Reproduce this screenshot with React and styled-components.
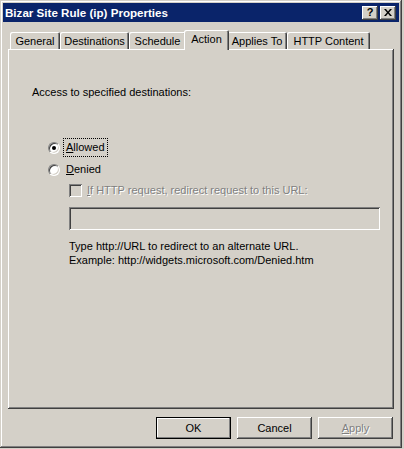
import React from 'react';
import styled, { createGlobalStyle } from 'styled-components';

const face = '#d4d0c8';
const shadow = '#808080';
const dark = '#404040';

const GlobalStyle = createGlobalStyle`
  html, body {
    margin: 0;
    padding: 0;
    background: ${face};
  }
  body {
    font-family: "Liberation Sans", Arial, sans-serif;
    font-size: 11px;
    color: #000;
  }
`;

const raised = `inset -1px -1px ${dark}, inset 1px 1px #fff, inset -2px -2px ${shadow}, inset 2px 2px ${face}`;
const sunken = `inset 1px 1px ${shadow}, inset -1px -1px #fff, inset 2px 2px ${dark}, inset -2px -2px ${face}`;

const tabs = [
  { label: 'General', width: 50 },
  { label: 'Destinations', width: 69 },
  { label: 'Schedule', width: 57 },
  { label: 'Action', width: 41, active: true },
  { label: 'Applies To', width: 60 },
  { label: 'HTTP Content', width: 83 },
];

function App() {
  return (
    <>
      <GlobalStyle />
      <Ventana>
        <BarraTitulo>
          <Titulo>Bizar Site Rule (ip) Properties</Titulo>
          <BotonesTitulo>
            <BotonTitulo>?</BotonTitulo>
            <BotonTitulo>
              <svg width="8" height="7" viewBox="0 0 8 7">
                <path d="M0 0h2l2 2.5L6 0h2L5 3.5 8 7H6L4 4.5 2 7H0l3-3.5z" fill="#000" />
              </svg>
            </BotonTitulo>
          </BotonesTitulo>
        </BarraTitulo>

        <Cuerpo>
          <FilaPestanas>
            {tabs.map((t) => (
              <Pestana key={t.label} $ancho={t.width} $activa={t.active}>
                {t.label}
              </Pestana>
            ))}
          </FilaPestanas>

          <Panel>
            <Etiqueta>Access to specified destinations:</Etiqueta>

            <GrupoRadios>
              <FilaOpcion>
                <Radio $marcado />
                <TextoFoco><u>A</u>llowed</TextoFoco>
              </FilaOpcion>
              <FilaOpcion>
                <Radio />
                <TextoOpcion><u>D</u>enied</TextoOpcion>
              </FilaOpcion>
            </GrupoRadios>

            <Sangria>
              <FilaCasilla>
                <Casilla />
                <TextoDeshabilitado><u>I</u>f HTTP request, redirect request to this URL:</TextoDeshabilitado>
              </FilaCasilla>
              <CampoTexto />
              <Ayuda>
                Type http://URL to redirect to an alternate URL.<br />
                Example: http://widgets.microsoft.com/Denied.htm
              </Ayuda>
            </Sangria>
          </Panel>

          <FilaBotones>
            <Boton $predeterminado>OK</Boton>
            <Boton>Cancel</Boton>
            <Boton $deshabilitado><u>A</u>pply</Boton>
          </FilaBotones>
        </Cuerpo>
      </Ventana>
    </>
  );
}

const Ventana = styled.div`
  width: 402px;
  height: 448px;
  box-sizing: border-box;
  padding: 3px;
  background: ${face};
  box-shadow: inset -1px -1px ${dark}, inset 1px 1px ${face}, inset -2px -2px ${shadow}, inset 2px 2px #fff;
  display: flex;
  flex-direction: column;
`;

const BarraTitulo = styled.div`
  height: 19px;
  background: #0a246a;
  display: flex;
  align-items: center;
  justify-content: space-between;
  padding: 0 3px 0 2px;
`;

const Titulo = styled.span`
  color: #fff;
  font-family: "Liberation Sans", Arial, sans-serif;
  font-weight: bold;
  font-size: 11.6px;
`;

const BotonesTitulo = styled.div`
  display: flex;
  gap: 2px;
`;

const BotonTitulo = styled.div`
  width: 16px;
  height: 14px;
  background: ${face};
  box-shadow: ${raised};
  display: flex;
  align-items: center;
  justify-content: center;
  font-family: "Liberation Sans", Arial, sans-serif;
  font-weight: bold;
  font-size: 11px;
  line-height: 1;
`;

const Cuerpo = styled.div`
  padding: 8px 5px 0 5px;
  display: flex;
  flex-direction: column;
`;

const FilaPestanas = styled.div`
  height: 19px;
  display: flex;
  align-items: flex-end;
  padding-left: 2px;
`;

const Pestana = styled.div`
  box-sizing: border-box;
  width: ${(p) => (p.$activa ? p.$ancho + 4 : p.$ancho)}px;
  height: ${(p) => (p.$activa ? 20 : 17)}px;
  margin: ${(p) => (p.$activa ? '0 -2px -1px -2px' : '0')};
  position: relative;
  z-index: ${(p) => (p.$activa ? 1 : 0)};
  background: ${face};
  box-shadow: inset 1px 1px #fff, inset -1px 0 ${dark}, inset -2px 0 ${shadow};
  border-radius: 2px 2px 0 0;
  display: flex;
  align-items: center;
  justify-content: center;
  padding-top: ${(p) => (p.$activa ? 0 : 1)}px;
  padding-bottom: ${(p) => (p.$activa ? 2 : 0)}px;
  white-space: nowrap;
`;

const Panel = styled.div`
  box-sizing: border-box;
  width: 386px;
  height: 360px;
  background: ${face};
  box-shadow: inset -1px -1px ${dark}, inset 1px 1px #fff, inset -2px -2px ${shadow};
  padding: 37px 0 0 24px;
  display: flex;
  flex-direction: column;
`;

const Etiqueta = styled.div`
  line-height: 13px;
`;

const GrupoRadios = styled.div`
  margin-top: 40px;
  margin-left: 16px;
  display: flex;
  flex-direction: column;
  gap: 5px;
`;

const FilaOpcion = styled.div`
  height: 17px;
  display: flex;
  align-items: center;
`;

const Radio = styled.span`
  box-sizing: border-box;
  width: 12px;
  height: 12px;
  border-radius: 50%;
  background: #fff;
  border: 1px solid;
  border-color: ${shadow} #fff #fff ${shadow};
  box-shadow: inset 1px 1px ${dark}, inset -1px -1px ${face};
  display: flex;
  align-items: center;
  justify-content: center;
  margin-right: 4px;

  &::after {
    content: '';
    width: 4px;
    height: 4px;
    border-radius: 50%;
    background: ${(p) => (p.$marcado ? '#000' : 'transparent')};
  }
`;

const TextoOpcion = styled.span`
  padding: 0 2px;
  line-height: 13px;
`;

const TextoFoco = styled(TextoOpcion)`
  outline: 1px dotted #000;
  outline-offset: 0;
  padding: 2px 2px;
`;

const Sangria = styled.div`
  margin-left: 37px;
  display: flex;
  flex-direction: column;
`;

const FilaCasilla = styled.div`
  margin-top: 5px;
  height: 15px;
  display: flex;
  align-items: center;
`;

const Casilla = styled.span`
  width: 13px;
  height: 13px;
  background: ${face};
  box-shadow: ${sunken};
  margin-right: 5px;
`;

const TextoDeshabilitado = styled.span`
  color: ${shadow};
  text-shadow: 1px 1px #fff;
  line-height: 13px;
`;

const CampoTexto = styled.div`
  margin-top: 9px;
  width: 311px;
  height: 23px;
  background: ${face};
  box-shadow: ${sunken};
`;

const Ayuda = styled.div`
  margin-top: 9px;
  line-height: 14px;
`;

const FilaBotones = styled.div`
  width: 385px;
  margin-top: 8px;
  display: flex;
  justify-content: flex-end;
  gap: 6px;
`;

const Boton = styled.div`
  box-sizing: border-box;
  width: 75px;
  height: 22px;
  background: ${face};
  box-shadow: ${(p) =>
    p.$predeterminado
      ? `inset 0 0 0 1px #000, inset -2px -2px ${shadow}, inset 2px 2px #fff`
      : raised};
  display: flex;
  align-items: center;
  justify-content: center;
  color: ${(p) => (p.$deshabilitado ? shadow : '#000')};
  text-shadow: ${(p) => (p.$deshabilitado ? '1px 1px #fff' : 'none')};
`;

export default App;
